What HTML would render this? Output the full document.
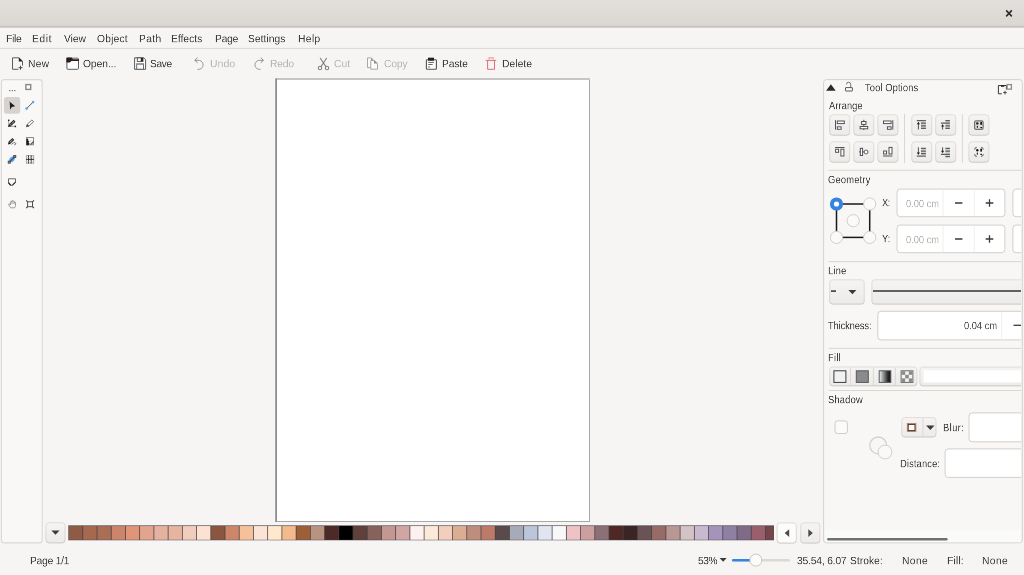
<!DOCTYPE html>
<html lang="en">
<head>
<meta charset="utf-8">
<title>Drawing</title>
<style>
html,body{margin:0;padding:0;}
body{width:1024px;height:575px;overflow:hidden;background:#f6f5f4;position:relative;
 font-family:"Liberation Sans",sans-serif;font-size:10px;line-height:12px;color:#3c3c3c;}
.t{position:absolute;white-space:nowrap;line-height:27px;transform-origin:0 0;transform:scale(0.444444);will-change:transform;}
svg{position:absolute;overflow:visible;}
</style>
</head>
<body>
<!--CHROME_START--><svg id="chrome" style="left:0;top:0" width="1024" height="575" viewBox="0 0 1024 575" fill="none">
<defs><linearGradient id="cbg" x1="0" y1="0" x2="0" y2="1"><stop offset="0" stop-color="#f5f4f3"/><stop offset="1" stop-color="#ecebe9"/></linearGradient><linearGradient id="cbs" x1="0" y1="0" x2="0" y2="1"><stop offset="0" stop-color="#e0dcd8"/><stop offset="0.8" stop-color="#dad5d1"/><stop offset="1" stop-color="#ccc6c0"/></linearGradient><linearGradient id="tbg" x1="0" y1="0" x2="0" y2="1"><stop offset="0" stop-color="#e2dfdc"/><stop offset="1" stop-color="#dbd7d3"/></linearGradient><clipPath id="palclip"><rect x="68.2" y="525.2" width="705.7" height="15.3"/></clipPath></defs>
<rect x="0" y="0" width="1024" height="26" fill="url(#tbg)"/>
<rect x="0" y="25.8" width="1024" height="1.9" fill="#c7c2bd"/>
<path d="M1006.2 10.4L1011.8 16.4M1011.8 10.4L1006.2 16.4" stroke="#2e2e2e" stroke-width="1.6"/>
<rect x="0" y="47.9" width="1024" height="1" fill="#dcd8d4"/>
<rect x="1.4" y="79.6" width="40.8" height="463.3" rx="2.8" fill="#f9f8f7" stroke="#dcd8d5" stroke-width="1.1"/>
<rect x="3.9" y="96.9" width="16.3" height="16.9" rx="3" fill="#d5d2cf"/>
<rect x="275.4" y="78.4" width="314.6" height="443.6" fill="#a8a8a8"/>
<rect x="275.4" y="78.4" width="1.6" height="443.6" fill="#8e8e8e"/>
<rect x="277" y="78.4" width="313" height="1.6" fill="#c6c6c6"/>
<rect x="277" y="80" width="312" height="441" fill="#fff"/>
<g clip-path="url(#palclip)">
<rect x="68.2" y="525.2" width="706" height="15.3" fill="#45424a"/>
<rect x="68.2" y="525.2" width="706" height="0.5" fill="#8a8c8e"/>
<rect x="68.95" y="526.05" width="13.45" height="13.75" fill="#8f5b44"/>
<rect x="83.17" y="526.05" width="13.45" height="13.75" fill="#a5694f"/>
<rect x="97.39" y="526.05" width="13.45" height="13.75" fill="#a96e53"/>
<rect x="111.62" y="526.05" width="13.45" height="13.75" fill="#cc846a"/>
<rect x="125.84" y="526.05" width="13.45" height="13.75" fill="#e09478"/>
<rect x="140.06" y="526.05" width="13.45" height="13.75" fill="#e3a48e"/>
<rect x="154.28" y="526.05" width="13.45" height="13.75" fill="#e6b2a0"/>
<rect x="168.51" y="526.05" width="13.45" height="13.75" fill="#e7b4a0"/>
<rect x="182.73" y="526.05" width="13.45" height="13.75" fill="#f0cdbd"/>
<rect x="196.95" y="526.05" width="13.45" height="13.75" fill="#fbe2d3"/>
<rect x="211.17" y="526.05" width="13.45" height="13.75" fill="#8b563f"/>
<rect x="225.39" y="526.05" width="13.45" height="13.75" fill="#cd8768"/>
<rect x="239.62" y="526.05" width="13.45" height="13.75" fill="#f5c09a"/>
<rect x="253.84" y="526.05" width="13.45" height="13.75" fill="#fbe3d6"/>
<rect x="268.06" y="526.05" width="13.45" height="13.75" fill="#ffe8cb"/>
<rect x="282.28" y="526.05" width="13.45" height="13.75" fill="#f4ba8c"/>
<rect x="296.51" y="526.05" width="13.45" height="13.75" fill="#9c5f38"/>
<rect x="310.73" y="526.05" width="13.45" height="13.75" fill="#b8937f"/>
<rect x="324.95" y="526.05" width="13.45" height="13.75" fill="#4b2a27"/>
<rect x="339.17" y="526.05" width="13.45" height="13.75" fill="#000000"/>
<rect x="353.39" y="526.05" width="13.45" height="13.75" fill="#5f4139"/>
<rect x="367.62" y="526.05" width="13.45" height="13.75" fill="#87625a"/>
<rect x="381.84" y="526.05" width="13.45" height="13.75" fill="#c39890"/>
<rect x="396.06" y="526.05" width="13.45" height="13.75" fill="#cfa6a3"/>
<rect x="410.28" y="526.05" width="13.45" height="13.75" fill="#fdf0ee"/>
<rect x="424.50" y="526.05" width="13.45" height="13.75" fill="#fde9da"/>
<rect x="438.73" y="526.05" width="13.45" height="13.75" fill="#f2cfbd"/>
<rect x="452.95" y="526.05" width="13.45" height="13.75" fill="#dbae92"/>
<rect x="467.17" y="526.05" width="13.45" height="13.75" fill="#be8d7c"/>
<rect x="481.39" y="526.05" width="13.45" height="13.75" fill="#bc7b69"/>
<rect x="495.62" y="526.05" width="13.45" height="13.75" fill="#5a4a4c"/>
<rect x="509.84" y="526.05" width="13.45" height="13.75" fill="#a7abb8"/>
<rect x="524.06" y="526.05" width="13.45" height="13.75" fill="#bcc6da"/>
<rect x="538.28" y="526.05" width="13.45" height="13.75" fill="#e0e5f1"/>
<rect x="552.50" y="526.05" width="13.45" height="13.75" fill="#f8f8f8"/>
<rect x="566.73" y="526.05" width="13.45" height="13.75" fill="#edc3c5"/>
<rect x="580.95" y="526.05" width="13.45" height="13.75" fill="#cd9f9e"/>
<rect x="595.17" y="526.05" width="13.45" height="13.75" fill="#8b7176"/>
<rect x="609.39" y="526.05" width="13.45" height="13.75" fill="#4f2826"/>
<rect x="623.62" y="526.05" width="13.45" height="13.75" fill="#3b2524"/>
<rect x="637.84" y="526.05" width="13.45" height="13.75" fill="#6a5255"/>
<rect x="652.06" y="526.05" width="13.45" height="13.75" fill="#996b66"/>
<rect x="666.28" y="526.05" width="13.45" height="13.75" fill="#b89795"/>
<rect x="680.50" y="526.05" width="13.45" height="13.75" fill="#d4c3c5"/>
<rect x="694.73" y="526.05" width="13.45" height="13.75" fill="#c8b9cf"/>
<rect x="708.95" y="526.05" width="13.45" height="13.75" fill="#a594ba"/>
<rect x="723.17" y="526.05" width="13.45" height="13.75" fill="#8f7fa3"/>
<rect x="737.39" y="526.05" width="13.45" height="13.75" fill="#806a87"/>
<rect x="751.62" y="526.05" width="13.45" height="13.75" fill="#9a5e6c"/>
<rect x="765.84" y="526.05" width="13.45" height="13.75" fill="#72464a"/>
</g>
<rect x="46.0" y="522.7" width="19.0" height="20.2" rx="3.0" fill="url(#cbg)" stroke="url(#cbs)" stroke-width="1"/>
<rect x="777.1" y="522.9" width="19.2" height="20.2" rx="3.0" fill="#fcfcfb" stroke="url(#cbs)" stroke-width="1"/>
<rect x="800.7" y="522.9" width="19.2" height="20.2" rx="3.0" fill="url(#cbg)" stroke="url(#cbs)" stroke-width="1"/>
<path d="M51.4 530.6H59.6L55.5 534.8Z" fill="#3a3a3a"/>
<path d="M789.2 529.3V536.9L784.7 533.1Z" fill="#4a4a4a"/>
<path d="M808.3 529.3V536.9L812.8 533.1Z" fill="#4a4a4a"/>
<path d="M719.6 557.9H726.7L723.15 561.7Z" fill="#3a3a3a"/>
<rect x="732" y="558.9" width="58" height="2.5" rx="1.25" fill="#dcd8d4"/>
<rect x="732" y="558.9" width="22" height="2.5" rx="1.25" fill="#3584e4"/>
<circle cx="755.9" cy="560.1" r="6" fill="#fbfbfa" stroke="#cbc6c1" stroke-width="1"/>
<rect x="823.6" y="79.6" width="198.7" height="463.2" rx="2.8" fill="#f8f7f6" stroke="#d5d0cb" stroke-width="1"/>
</svg><!--CHROME_END-->
<!--TBICONS_START--><svg id="tbicons" style="left:0;top:0" width="1024" height="575" viewBox="0 0 1024 575" fill="none">
<!-- New -->
<g>
<path d="M12.5 69.3V57.8H19L22.5 61.2V65.6M12.5 69.3H18.4" stroke="#5a5e62" stroke-width="1"/>
<path d="M18.8 57.6L22.9 61.4H18.8Z" fill="#2a1b1c"/>
<path d="M20.5 65.7V69.7M18.5 67.7H22.5" stroke="#3a3a3a" stroke-width="0.9"/>
</g>
<!-- Open -->
<g>
<rect x="66.9" y="58.2" width="11.6" height="11.1" rx="1" fill="#fdfdfd" stroke="#5a5e62" stroke-width="1"/>
<path d="M66.4 57.6H71.6L72.9 59.2H79V61.1H71.4L69.8 62.6H66.4Z" fill="#2a1b1c"/>
</g>
<!-- Save -->
<g>
<path d="M134.6 57.8H143.7L145.6 59.8V69.3H134.6Z" fill="#fdfdfd" stroke="#55595d" stroke-width="1"/>
<rect x="137.3" y="57.9" width="5.7" height="3.5" fill="#fff" stroke="#4a4a4a" stroke-width="0.9"/>
<rect x="140.8" y="58" width="2.1" height="3.3" fill="#2a1b1c"/>
<rect x="136.7" y="64" width="6.8" height="5.2" fill="#fafafa" stroke="#5a5e62" stroke-width="0.9"/>
<rect x="136.3" y="63.3" width="7.6" height="1.3" fill="#8f8f8f"/>
</g>
<!-- Undo -->
<g stroke="#9a9b9c" stroke-width="1" stroke-linecap="round">
<path d="M195.2 60.4H199.4A4.5 4.5 0 0 1 197.7 69.4"/>
<path d="M197.2 57.9L194.9 60.4L197.2 62.5" stroke="#8a8b8c"/>
</g>
<!-- Redo -->
<g stroke="#9a9b9c" stroke-width="1" stroke-linecap="round">
<path d="M263 60.4H258.8A4.5 4.5 0 0 0 260.2 69.4"/>
<path d="M261 57.9L263.3 60.4L261 62.5" stroke="#8a8b8c"/>
</g>
<!-- Cut -->
<g stroke="#7c7f82" stroke-width="1.05" stroke-linecap="round">
<path d="M320.3 58.3L325.9 66.6M326.5 58.3L321 66.6"/>
<circle cx="320" cy="68" r="1.7"/>
<circle cx="327" cy="68" r="1.7"/>
</g>
<!-- Copy -->
<g stroke="#a6a7a8" stroke-width="1">
<path d="M370.5 67.6H367.5V57.9H371.2L373.6 60.2" fill="#fbfbfb"/>
<path d="M370.8 60.5H374.2L377.5 63.4V69.2H370.8Z" fill="#fdfdfd"/>
<path d="M374 60.3V63.5H377.6Z" fill="#8a8b8c" stroke="none"/>
<path d="M371 57.7V60.2H373.8Z" fill="#9a9b9c" stroke="none"/>
</g>
<!-- Paste -->
<g>
<rect x="426.4" y="59.8" width="10" height="9.5" rx="0.8" fill="#fdfdfd" stroke="#4f5357" stroke-width="1.1"/>
<rect x="428" y="57.7" width="6" height="3" fill="#2a1b1c"/>
<rect x="428.3" y="57.1" width="5.4" height="0.7" fill="#b0b0b0"/>
<path d="M428.2 62.4H434M428.2 64.5H432.7" stroke="#55595d" stroke-width="0.9"/>
<rect x="428.2" y="66" width="1.9" height="1.8" fill="#a8a8a8"/>
</g>
<!-- Delete -->
<g stroke="#e6677f" stroke-width="1">
<path d="M485.7 60.4H496.2M487.6 60.4V69.3H494.5V60.4"/>
<path d="M489 59.5V57.9H493.3V59.5" stroke="#f0a193" stroke-width="1.1"/>
</g>
</svg>
<!--TBICONS_END-->
<!--TOOLICONS_START--><svg id="toolicons" style="left:0;top:0" width="1024" height="575" viewBox="0 0 1024 575" fill="none">
<!-- dots -->
<g fill="#6f6f6f"><rect x="9.2" y="90" width="1.2" height="1.2"/><rect x="11.7" y="90" width="1.2" height="1.2"/><rect x="14.2" y="90" width="1.2" height="1.2"/></g>
<!-- square -->
<rect x="25.9" y="84.6" width="4.8" height="4.8" fill="#fff" stroke="#888" stroke-width="1.4"/>
<!-- arrow -->
<path d="M9.7 101.7L15.2 106.3L11.8 106.9L10.1 109.7Z" fill="#241a1c"/>
<path d="M9.3 101.3L9.9 102" stroke="#888" stroke-width="0.6"/>
<!-- line -->
<path d="M26.7 108.5L33 102.2" stroke="#55595d" stroke-width="1"/>
<circle cx="26.6" cy="108.6" r="1.3" fill="#5aa9f0"/><circle cx="33.1" cy="102.1" r="1.3" fill="#5aa9f0"/>
<!-- node edit -->
<path d="M8.7 120.3V126.4H15.4" stroke="#808080" stroke-width="0.7"/>
<path d="M9.9 125.3L14.6 120.8" stroke="#262626" stroke-width="2.7"/>
<path d="M10.4 124.8L14.2 121.2" stroke="#f2f2f2" stroke-width="1" stroke-dasharray="1.1 0.9"/>
<path d="M8.1 127L8.9 124.2L11.1 126.3Z" fill="#1c1c1c"/>
<g fill="#222"><rect x="8" y="119.6" width="1.4" height="1.4"/><rect x="14.6" y="125.7" width="1.5" height="1.5"/></g>
<!-- pencil -->
<g stroke="#55585b" stroke-width="0.8">
<path d="M26.6 126.6L27.3 124.3L31.9 120L33.6 121.7L29 126Z" fill="#f8f8f8"/>
<path d="M26.5 126.7L27.2 124.5L28.9 126.1Z" fill="#4a4a4a"/>
</g>
<!-- calligraphy -->
<path d="M9.6 142.6L13.4 139" stroke="#2a2a2a" stroke-width="2.7"/>
<path d="M10 142.2L13.1 139.3" stroke="#f0f0f0" stroke-width="1" stroke-dasharray="1 0.9"/>
<path d="M7.9 144.4L8.7 141.6L10.9 143.7Z" fill="#1c1c1c"/>
<path d="M11.2 144.6C12.4 142.6 15.6 141.9 15.7 143.5C15.8 144.6 14.6 145.2 14.2 144.5" stroke="#4a4a4a" stroke-width="0.8"/>
<!-- image -->
<g>
<rect x="26.5" y="137.6" width="7" height="7.2" fill="#fbfbfb" stroke="#7a7a7a" stroke-width="0.9"/>
<path d="M26.4 145.2V139.2L27.6 138.4L28.4 139.4L28 140.4L29.4 141.2L28.6 142.4L29.6 143.4L28.6 145.2Z" fill="#1e1e1e"/>
<path d="M30 145.2L30.6 143.4L33.2 140.9L34.2 141.9L31.6 144.5Z" fill="#5f5f5f"/>
<path d="M29.8 141.6L31.4 140.2" stroke="#999" stroke-width="0.6"/>
</g>
<!-- connector -->
<g>
<ellipse cx="12" cy="159.4" rx="3.1" ry="2.4" transform="rotate(-45 12 159.4)" fill="#58a9f3"/>
<path d="M9.4 162.1L14.7 156.6" stroke="#3b4f68" stroke-width="1.1"/>
<rect x="8.2" y="161.1" width="2.1" height="2.1" fill="#6f9fd2" stroke="#3f3f3f" stroke-width="0.8"/>
<rect x="13.7" y="155.5" width="2.1" height="2.1" fill="#8a8a8a" stroke="#3f3f3f" stroke-width="0.8"/>
</g>
<!-- grid -->
<g>
<path d="M26.4 155.4V163.4M33.7 155.4V163.4M26.1 155.7H34M26.1 163.2H34" stroke="#8a8a8a" stroke-width="0.7"/>
<path d="M28.5 155.4V163.4M31.2 155.4V163.4M26.1 159.4H34" stroke="#222" stroke-width="0.9"/>
<path d="M26.1 157.5H34M26.1 161.4H34" stroke="#bbb" stroke-width="0.5"/>
</g>
<!-- callout -->
<g>
<path d="M8.5 178.8H15.5V182.6L12.6 185.3H10.6L8.5 182.8Z" stroke="#4a4a4a" stroke-width="0.85" fill="#fbfbfb"/>
<path d="M8.5 182.6L10.7 185.3" stroke="#1e1e1e" stroke-width="1.25"/>
<path d="M12.5 185L15.4 182.2" stroke="#333" stroke-width="1.1"/>
</g>
<!-- hand -->
<g stroke="#8c8c8c" stroke-width="0.85" fill="#f9f9f9">
<path d="M10.6 207.8L8.6 204.6C8.2 203.9 9.2 203.4 9.8 204.1L10.6 205V201.8C10.6 200.9 11.8 200.9 11.8 201.8V201.2C11.8 200.3 13.1 200.3 13.1 201.2V201.6C13.1 200.8 14.3 200.8 14.3 201.6V202.4C14.3 201.7 15.5 201.7 15.5 202.5V205.4C15.5 206.6 15 207.2 14.6 207.8Z"/>
<path d="M11.8 201.8V204M13.1 201.6V204M14.3 202.4V204.2" stroke-width="0.6"/>
</g>
<!-- frame -->
<g stroke="#484848" stroke-width="0.95">
<rect x="27.6" y="201.8" width="4.9" height="4.9" fill="#fbfbfb"/>
<path d="M26.2 200.4L27.6 201.8M33.9 200.4L32.5 201.8M26.2 208.1L27.6 206.7M33.9 208.1L32.5 206.7" stroke-width="1.2"/>
</g>
</svg>
<!--TOOLICONS_END-->
<!-- right panel -->
<!--PANEL_START--><div id="pclip" style="position:absolute;left:0;top:0;width:1021px;height:575px;overflow:hidden">
<svg id="panelboxes" style="left:0;top:0" width="1021" height="575" viewBox="0 0 1021 575" fill="none">
<defs><linearGradient id="bg1" x1="0" y1="0" x2="0" y2="1"><stop offset="0" stop-color="#f5f4f3"/><stop offset="1" stop-color="#ecebe9"/></linearGradient><linearGradient id="bs1" x1="0" y1="0" x2="0" y2="1"><stop offset="0" stop-color="#e0dcd8"/><stop offset="0.8" stop-color="#dad5d1"/><stop offset="1" stop-color="#ccc6c0"/></linearGradient></defs>
<rect x="829.7" y="114.8" width="20.0" height="20.4" rx="3.0" fill="url(#bg1)" stroke="url(#bs1)" stroke-width="1"/>
<rect x="853.8" y="114.8" width="20.0" height="20.4" rx="3.0" fill="url(#bg1)" stroke="url(#bs1)" stroke-width="1"/>
<rect x="877.9" y="114.8" width="20.0" height="20.4" rx="3.0" fill="url(#bg1)" stroke="url(#bs1)" stroke-width="1"/>
<rect x="911.8" y="114.8" width="20.0" height="20.4" rx="3.0" fill="url(#bg1)" stroke="url(#bs1)" stroke-width="1"/>
<rect x="935.7" y="114.8" width="20.0" height="20.4" rx="3.0" fill="url(#bg1)" stroke="url(#bs1)" stroke-width="1"/>
<rect x="968.9" y="114.8" width="20.0" height="20.4" rx="3.0" fill="url(#bg1)" stroke="url(#bs1)" stroke-width="1"/>
<rect x="829.7" y="141.8" width="20.0" height="20.4" rx="3.0" fill="url(#bg1)" stroke="url(#bs1)" stroke-width="1"/>
<rect x="853.8" y="141.8" width="20.0" height="20.4" rx="3.0" fill="url(#bg1)" stroke="url(#bs1)" stroke-width="1"/>
<rect x="877.9" y="141.8" width="20.0" height="20.4" rx="3.0" fill="url(#bg1)" stroke="url(#bs1)" stroke-width="1"/>
<rect x="911.8" y="141.8" width="20.0" height="20.4" rx="3.0" fill="url(#bg1)" stroke="url(#bs1)" stroke-width="1"/>
<rect x="935.7" y="141.8" width="20.0" height="20.4" rx="3.0" fill="url(#bg1)" stroke="url(#bs1)" stroke-width="1"/>
<rect x="968.9" y="141.8" width="20.0" height="20.4" rx="3.0" fill="url(#bg1)" stroke="url(#bs1)" stroke-width="1"/>
<path d="M904.5 113.9V163.1" stroke="#dad6d2" stroke-width="1"/>
<path d="M962.4 113.9V163.1" stroke="#dad6d2" stroke-width="1"/>
<path d="M828.6 170.3H1021.0" stroke="#dad6d2" stroke-width="1"/>
<rect x="897.0" y="189.1" width="107.9" height="27.6" rx="3.2" fill="#fff" stroke="#d3cec9" stroke-width="1"/>
<rect x="1012.9" y="189.1" width="59.0" height="27.6" rx="3.2" fill="#fff" stroke="#d3cec9" stroke-width="1"/>
<path d="M943.0 189.6V216.2" stroke="#f2f0ee" stroke-width="1"/>
<path d="M974.3 189.6V216.2" stroke="#f2f0ee" stroke-width="1"/>
<rect x="897.0" y="225.1" width="107.9" height="27.6" rx="3.2" fill="#fff" stroke="#d3cec9" stroke-width="1"/>
<rect x="1012.9" y="225.1" width="59.0" height="27.6" rx="3.2" fill="#fff" stroke="#d3cec9" stroke-width="1"/>
<path d="M943.0 225.6V252.2" stroke="#f2f0ee" stroke-width="1"/>
<path d="M974.3 225.6V252.2" stroke="#f2f0ee" stroke-width="1"/>
<path d="M828.6 261.6H1021.0" stroke="#dad6d2" stroke-width="1"/>
<rect x="829.7" y="279.8" width="34.5" height="24.3" rx="3.0" fill="url(#bg1)" stroke="url(#bs1)" stroke-width="1"/>
<rect x="871.9" y="279.8" width="199.0" height="24.3" rx="3.0" fill="url(#bg1)" stroke="url(#bs1)" stroke-width="1"/>
<rect x="877.8" y="311.3" width="199.0" height="28.6" rx="3.2" fill="#fff" stroke="#d3cec9" stroke-width="1"/>
<path d="M1001.5 312.0V339.2" stroke="#f2f0ee" stroke-width="1"/>
<path d="M828.6 348.4H1021.0" stroke="#dad6d2" stroke-width="1"/>
<rect x="829.7" y="367.0" width="87.2" height="18.8" rx="3.0" fill="url(#bg1)" stroke="url(#bs1)" stroke-width="1"/>
<path d="M850.5 367.6V385.4" stroke="#dcd8d4" stroke-width="1"/>
<path d="M873.4 367.6V385.4" stroke="#dcd8d4" stroke-width="1"/>
<path d="M895.4 367.6V385.4" stroke="#dcd8d4" stroke-width="1"/>
<rect x="919.9" y="367.1" width="159.0" height="18.8" rx="3.0" fill="url(#bg1)" stroke="url(#bs1)" stroke-width="1"/>
<rect x="923.6" y="370.3" width="120" height="12.2" fill="#fff"/>
<path d="M828.6 390.5H1021.0" stroke="#dad6d2" stroke-width="1"/>
<rect x="835" y="420.9" width="12.4" height="12.6" rx="2.4" fill="#fbfbfb" stroke="#d0cbc6" stroke-width="1"/>
<rect x="901.8" y="417.6" width="34.2" height="19.4" rx="3.0" fill="url(#bg1)" stroke="url(#bs1)" stroke-width="1"/>
<path d="M923.0 418.1V436.5" stroke="#dcd8d4" stroke-width="1"/>
<rect x="969.0" y="412.9" width="99.0" height="28.9" rx="3.2" fill="#fff" stroke="#d3cec9" stroke-width="1"/>
<rect x="945.1" y="448.9" width="99.0" height="28.5" rx="3.2" fill="#fff" stroke="#d3cec9" stroke-width="1"/>
<rect x="825" y="530" width="197" height="12.2" fill="#fafaf9"/>
<rect x="827.1" y="537.9" width="120.5" height="2.5" rx="1.25" fill="#6f7173"/>
</svg>
<svg id="panelicons" style="left:0;top:0" width="1021" height="575" viewBox="0 0 1021 575" fill="none">
<!-- header icons -->
<path d="M826.1 90.7L830.9 84.3L835.7 90.7Z" fill="#2a2a2a"/>
<rect x="845.5" y="87.6" width="6.9" height="3.4" rx="0.3" fill="#fdfdfd" stroke="#55585b" stroke-width="1"/>
<path d="M850.7 87.2V84.3A2.1 2.1 0 0 0 846.5 84.4" stroke="#6a6d70" stroke-width="0.95"/>
<g>
<path d="M1001.8 93.8H998.4V85.5H1006.4V89.4" stroke="#3a3a3a" stroke-width="1"/>
<path d="M1001 86.1H1004.2" stroke="#241a1c" stroke-width="1.4"/>
<path d="M1005 90.8V94.4M1003.2 92.6H1006.8" stroke="#3a3a3a" stroke-width="0.9"/>
<rect x="1007.1" y="84.6" width="4.3" height="4.5" fill="#fff" stroke="#8a8a8a" stroke-width="1.3"/>
</g>
<!-- align icons -->
<g stroke="#484b4e" stroke-width="0.95" fill="#fdfdfd">
<path d="M835.5 120.2V129.6"/><rect x="837.3" y="121" width="7" height="2.6"/><rect x="837.3" y="126.8" width="3.8" height="2.5"/>
<path d="M863.8 119.8V130.1"/><rect x="861.6" y="121.5" width="4.4" height="2.9"/><rect x="860.1" y="126.5" width="7.6" height="2.3"/>
<path d="M892.8 120.2V129.6"/><rect x="883.5" y="121" width="7.6" height="2.6"/><rect x="887.4" y="126.8" width="3.7" height="2.5"/>
<path d="M835.1 147.5H844.5"/><rect x="835.6" y="149.2" width="3" height="3.1"/><rect x="840.9" y="149.2" width="3" height="6.8"/>
<path d="M859 151.9H868.2"/><rect x="860.3" y="148.3" width="2.3" height="7.2"/><rect x="864.3" y="150.2" width="3.5" height="3.6" rx="1.3"/>
<path d="M883 156H892.4"/><rect x="883.6" y="151" width="3" height="3"/><rect x="889" y="147.4" width="3" height="6.6"/>
</g>
<!-- raise/lower icons -->
<g fill="#cfcfcf"><rect x="921" y="122" width="4.9" height="7"/><rect x="945.4" y="120" width="4.5" height="9"/><rect x="921" y="148" width="4.9" height="7"/><rect x="945.4" y="148" width="4.5" height="9"/></g>
<g stroke="#5c5f62" stroke-width="1.25">
<path d="M916.8 120.6H925.9M921 123.2H925.9M921 125.8H925.9M921 128.4H925.9"/>
<path d="M945.4 120.6H949.9M940.9 123.2H949.9M945.4 125.8H949.9M945.4 128.4H949.9"/>
<path d="M921 148.4H925.9M921 151H925.9M921 153.6H925.9M916.8 156.2H925.9"/>
<path d="M945.4 148.4H949.9M945.4 151H949.9M940.9 154.4H949.9M945.4 156.6H949.9" />
</g>
<g stroke="#2a2a2a" stroke-width="0.8">
<path d="M918.4 122.4V129.5"/><path d="M942.6 124.8V129.5"/>
<path d="M918.4 147.3V154.4"/><path d="M942.6 147.3V152.6"/>
</g>
<g fill="#1e1e1e">
<path d="M918.4 122L920 124.3H916.8Z"/><path d="M942.6 124.2L944.2 126.5H941Z"/>
<path d="M918.4 154.8L920 152.5H916.8Z"/><path d="M942.6 153L944.2 150.7H941Z"/>
</g>
<!-- group / ungroup -->
<rect x="974.6" y="120.8" width="8.5" height="8.6" rx="1.4" fill="#dedede" stroke="#727272" stroke-width="1.25"/>
<g fill="#161616">
<circle cx="977.3" cy="123.4" r="1.2"/><rect x="980.3" y="121.9" width="1.7" height="2.9"/><rect x="976.8" y="125.8" width="1.1" height="2"/><rect x="980.3" y="127" width="1.7" height="1.1"/>
<circle cx="977.3" cy="150.2" r="1.2"/><rect x="980.3" y="148.7" width="1.7" height="2.9"/><rect x="976.8" y="152.6" width="1.1" height="2"/><rect x="980.3" y="153.8" width="1.7" height="1.1"/>
</g>
<g stroke="#7c7c7c" stroke-width="1.2">
<path d="M974.5 149.6A2.8 2.8 0 0 1 976.8 147.4M981 147.4A2.8 2.8 0 0 1 983.4 149.6M983.4 154.2A2.8 2.8 0 0 1 981 156.6M976.8 156.6A2.8 2.8 0 0 1 974.5 154.2"/>
</g>
<!-- geometry widget -->
<rect x="836.5" y="204" width="33.2" height="33.4" stroke="#1a1a1a" stroke-width="1.5"/>
<g fill="#fafafa" stroke="#cfc9c4" stroke-width="0.9">
<circle cx="869.7" cy="204" r="6.1"/><circle cx="836.5" cy="237.4" r="6.1"/><circle cx="869.7" cy="237.4" r="6.1"/><circle cx="853.2" cy="220.7" r="6.1"/>
</g>
<circle cx="836.5" cy="204" r="4.6" fill="#fff" stroke="#3584e4" stroke-width="4"/>
<!-- spin +/- -->
<g stroke="#3a3a3a" stroke-width="1.3">
<path d="M955 203H962.4M985.7 203H993.3M989.5 199.2V206.8"/>
<path d="M955 239H962.4M985.7 239H993.3M989.5 235.2V242.8"/>
<path d="M1013.5 325.3H1021"/>
</g>
<!-- line combo -->
<path d="M831 291.1H836" stroke="#2e2e2e" stroke-width="1.5"/>
<path d="M848.4 290H856.4L852.4 294.2Z" fill="#3a3a3a"/>
<path d="M873 291.1H1021" stroke="#2e3234" stroke-width="1.5"/>
<!-- fill icons -->
<rect x="833.9" y="370.8" width="12" height="11.6" fill="#f2f2f2" stroke="#3a3a3a" stroke-width="1"/>
<rect x="856.3" y="370.8" width="12" height="11.6" fill="#8a8a8a" stroke="#55595d" stroke-width="1"/>
<linearGradient id="lg1" x1="0" x2="1" y1="0" y2="0"><stop offset="0" stop-color="#f4f4f4"/><stop offset="0.75" stop-color="#2a2a2a"/><stop offset="1" stop-color="#111"/></linearGradient>
<rect x="879.2" y="370.8" width="11.6" height="11.6" fill="url(#lg1)" stroke="#55595d" stroke-width="1"/>
<rect x="901.1" y="370.8" width="11.8" height="11.6" fill="#f4f4f4" stroke="#6a6a6a" stroke-width="1"/>
<g fill="#8a8a8a"><rect x="901.6" y="371.3" width="3.6" height="3.5"/><rect x="908.8" y="371.3" width="3.6" height="3.5"/><rect x="905.2" y="374.8" width="3.6" height="3.6"/><rect x="901.6" y="378.4" width="3.6" height="3.5"/><rect x="908.8" y="378.4" width="3.6" height="3.5"/></g>
<!-- shadow -->
<rect x="907.3" y="423.5" width="8.6" height="8" fill="#fbfbfb" stroke="#d0703f" stroke-width="0.8"/>
<rect x="908.2" y="424.4" width="6.8" height="6.2" stroke="#3a3333" stroke-width="1"/>
<path d="M926.1 425.6H934.5L930.3 429.9Z" fill="#3a3a3a"/>
<circle cx="878.2" cy="445.4" r="8.4" stroke="#d4cfca" stroke-width="1.3" fill="#f8f7f6"/>
<circle cx="885" cy="452" r="6.9" stroke="#d4cfca" stroke-width="1" fill="#faf9f8"/>
</svg>

</div><!--PANEL_END-->
<!--LABELS_START--><span class="t" style="left:6.19px;top:33px;font-size:23px;letter-spacing:-0.569px">File</span>
<span class="t" style="left:32.17px;top:33px;font-size:23px;letter-spacing:1.411px">Edit</span>
<span class="t" style="left:63.58px;top:33px;font-size:23px;letter-spacing:-0.054px">View</span>
<span class="t" style="left:97.32px;top:33px;font-size:23px;letter-spacing:0.489px">Object</span>
<span class="t" style="left:138.57px;top:33px;font-size:23px;letter-spacing:0.878px">Path</span>
<span class="t" style="left:171.17px;top:33px;font-size:23px;letter-spacing:0.056px">Effects</span>
<span class="t" style="left:214.57px;top:33px;font-size:23px;letter-spacing:-0.461px">Page</span>
<span class="t" style="left:248.31px;top:33px;font-size:23px;letter-spacing:0.130px">Settings</span>
<span class="t" style="left:297.57px;top:33px;font-size:23px;letter-spacing:0.869px">Help</span>
<span class="t" style="left:28.01px;top:58px;font-size:23px;letter-spacing:0.615px">New</span>
<span class="t" style="left:83.32px;top:58px;font-size:23px;letter-spacing:-0.056px">Open...</span>
<span class="t" style="left:150.31px;top:58px;font-size:23px;letter-spacing:-0.885px">Save</span>
<span class="t" style="left:210.15px;top:58px;font-size:23px;letter-spacing:0.517px;color:#b5b5b4">Undo</span>
<span class="t" style="left:269.81px;top:58px;font-size:23px;letter-spacing:-0.340px;color:#b5b5b4">Redo</span>
<span class="t" style="left:334.03px;top:58px;font-size:23px;letter-spacing:0.482px;color:#b5b5b4">Cut</span>
<span class="t" style="left:384.03px;top:58px;font-size:23px;letter-spacing:-0.209px;color:#b5b5b4">Copy</span>
<span class="t" style="left:441.87px;top:58px;font-size:23px;letter-spacing:-0.138px">Paste</span>
<span class="t" style="left:501.87px;top:58px;font-size:23px;letter-spacing:0.232px">Delete</span>
<span class="t" style="left:29.57px;top:555px;font-size:23px;letter-spacing:-0.495px">Page 1/1</span>
<span class="t" style="left:697.69px;top:555px;font-size:23px;letter-spacing:-1.030px">53%</span>
<span class="t" style="left:796.58px;top:555px;font-size:23px;letter-spacing:-0.347px">35.54, 6.07</span>
<span class="t" style="left:849.69px;top:555px;font-size:23px;letter-spacing:0.120px">Stroke:</span>
<span class="t" style="left:902.01px;top:555px;font-size:23px;letter-spacing:0.968px">None</span>
<span class="t" style="left:946.55px;top:555px;font-size:23px;letter-spacing:0.374px">Fill:</span>
<span class="t" style="left:982.01px;top:555px;font-size:23px;letter-spacing:0.968px">None</span>
<span class="t" style="left:865.12px;top:82px;font-size:23px;letter-spacing:0.300px;transform:scale(0.405,0.444444)">Tool Options</span>
<span class="t" style="left:828.53px;top:100px;font-size:23px;letter-spacing:0.170px;transform:scale(0.405,0.444444)">Arrange</span>
<span class="t" style="left:827.65px;top:174px;font-size:23px;letter-spacing:0.509px;transform:scale(0.405,0.444444)">Geometry</span>
<span class="t" style="left:882.22px;top:197px;font-size:23px;letter-spacing:-1.283px;transform:scale(0.405,0.444444)">X:</span>
<span class="t" style="left:881.89px;top:233px;font-size:23px;letter-spacing:0.042px;transform:scale(0.405,0.444444)">Y:</span>
<span class="t" style="left:905.70px;top:198px;font-size:23px;letter-spacing:-0.084px;transform:scale(0.405,0.444444);color:#b4b2b0">0.00 cm</span>
<span class="t" style="left:905.70px;top:234px;font-size:23px;letter-spacing:-0.084px;transform:scale(0.405,0.444444);color:#b4b2b0">0.00 cm</span>
<span class="t" style="left:828.06px;top:265px;font-size:23px;letter-spacing:0.506px;transform:scale(0.405,0.444444)">Line</span>
<span class="t" style="left:828.36px;top:320px;font-size:23px;letter-spacing:-0.292px;transform:scale(0.405,0.444444)">Thickness:</span>
<span class="t" style="left:964.46px;top:320px;font-size:23px;letter-spacing:-0.041px;transform:scale(0.405,0.444444);color:#4a4a4a">0.04 cm</span>
<span class="t" style="left:827.92px;top:352px;font-size:23px;letter-spacing:0.641px;transform:scale(0.405,0.444444)">Fill</span>
<span class="t" style="left:828.01px;top:394px;font-size:23px;letter-spacing:0.481px;transform:scale(0.405,0.444444)">Shadow</span>
<span class="t" style="left:942.53px;top:422px;font-size:23px;letter-spacing:1.035px;transform:scale(0.405,0.444444)">Blur:</span>
<span class="t" style="left:899.79px;top:458px;font-size:23px;letter-spacing:0.358px;transform:scale(0.405,0.444444)">Distance:</span><!--LABELS_END-->
</body>
</html>
